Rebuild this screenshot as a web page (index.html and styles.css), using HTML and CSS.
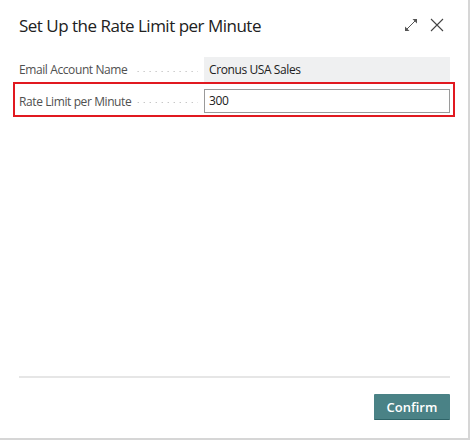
FILE: index.html
```html
<!DOCTYPE html>
<html>
<head>
<meta charset="utf-8">
<link rel="stylesheet" href="styles.css">
</head>
<body>
<div class="dialog">
  <div class="header">
    <h1 class="title">Set Up the Rate Limit per Minute</h1>
    <div class="actions">
      <svg class="icon" width="14" height="14" viewBox="0 0 14 14">
        <path d="M1.5 12.5 L12.5 1.5" fill="none" stroke="#555" stroke-width="1"/>
        <path d="M1 13 L1 8.5 L5.5 13 Z M13 1 L8.5 1 L13 5.5 Z" fill="#555"/>
      </svg>
      <svg class="icon close" width="14" height="14" viewBox="0 0 14 14">
        <path d="M1 1 L13 13 M13 1 L1 13" fill="none" stroke="#444" stroke-width="1.1"/>
      </svg>
    </div>
  </div>
  <div class="content">
    <div class="row">
      <div class="label"><span>Email Account Name</span><span class="dots"></span></div>
      <div class="value readonly">Cronus USA Sales</div>
    </div>
    <div class="row highlight">
      <div class="label"><span>Rate Limit per Minute</span><span class="dots"></span></div>
      <div class="value input">300</div>
    </div>
  </div>
  <div class="footer">
    <button class="btn">Confirm</button>
  </div>
</div>
</body>
</html>
```
FILE: styles.css
```css
html, body {
  margin: 0;
  padding: 0;
  background: #fff;
}
body {
  font-family: "Open Sans", "Noto Sans", sans-serif;
  color: #212121;
}
.dialog {
  box-sizing: border-box;
  width: 470px;
  height: 440px;
  border-right: 2px solid #d6d6d6;
  border-bottom: 2px solid #d6d6d6;
  display: flex;
  flex-direction: column;
  background: #fff;
}
.header {
  display: flex;
  justify-content: space-between;
  align-items: flex-start;
  padding: 14px 24px 19px 19px;
}
.title {
  margin: 0;
  font-size: 17px;
  font-weight: 400;
  letter-spacing: -0.5px;
  line-height: 24px;
  color: #212121;
}
.actions {
  display: flex;
  gap: 12px;
  padding-top: 4px;
}
.icon { display: block; }
.content {
  flex: 1;
  padding: 0 18px 0 19px;
}
.row {
  display: grid;
  grid-template-columns: 185px 1fr;
  align-items: center;
  font-size: 12px;
  letter-spacing: -0.4px;
}
.label {
  display: flex;
  align-items: center;
  color: #505050;
  padding-right: 6px;
}
.dots {
  flex: 1;
  height: 1px;
  margin-left: 6px;
  margin-top: 3px;
  background-image: linear-gradient(to right, #b0b0b0 1px, transparent 1px);
  background-size: 6px 1px;
  background-repeat: repeat-x;
  background-position: right center;
}
.value {
  box-sizing: border-box;
  height: 25px;
  line-height: 23px;
  padding: 0 4px;
  letter-spacing: -0.4px;
}
.readonly {
  background: #eff0f1;
  border: 1px solid #eff0f1;
}
.highlight {
  border: 2px solid #e11920;
  margin: 0 -5px 0 -6px;
  padding: 5px 3px 2px 4px;
}
.input {
  height: 24px;
  line-height: 22px;
  border: 1px solid #9a9a9a;
  background: #fff;
}
.footer {
  margin: 0 18px 0 19px;
  border-top: 2px solid #e6e6e6;
  padding: 16px 0 18px;
  display: flex;
  justify-content: flex-end;
}
.btn {
  width: 76px;
  height: 26px;
  background: #4a8286;
  border: none;
  border-bottom: 1px solid #2f6468;
  border-radius: 1px;
  color: #fff;
  font-family: "Open Sans", "Noto Sans", sans-serif;
  font-size: 13px;
  font-weight: 600;
  padding: 0;
}
```
